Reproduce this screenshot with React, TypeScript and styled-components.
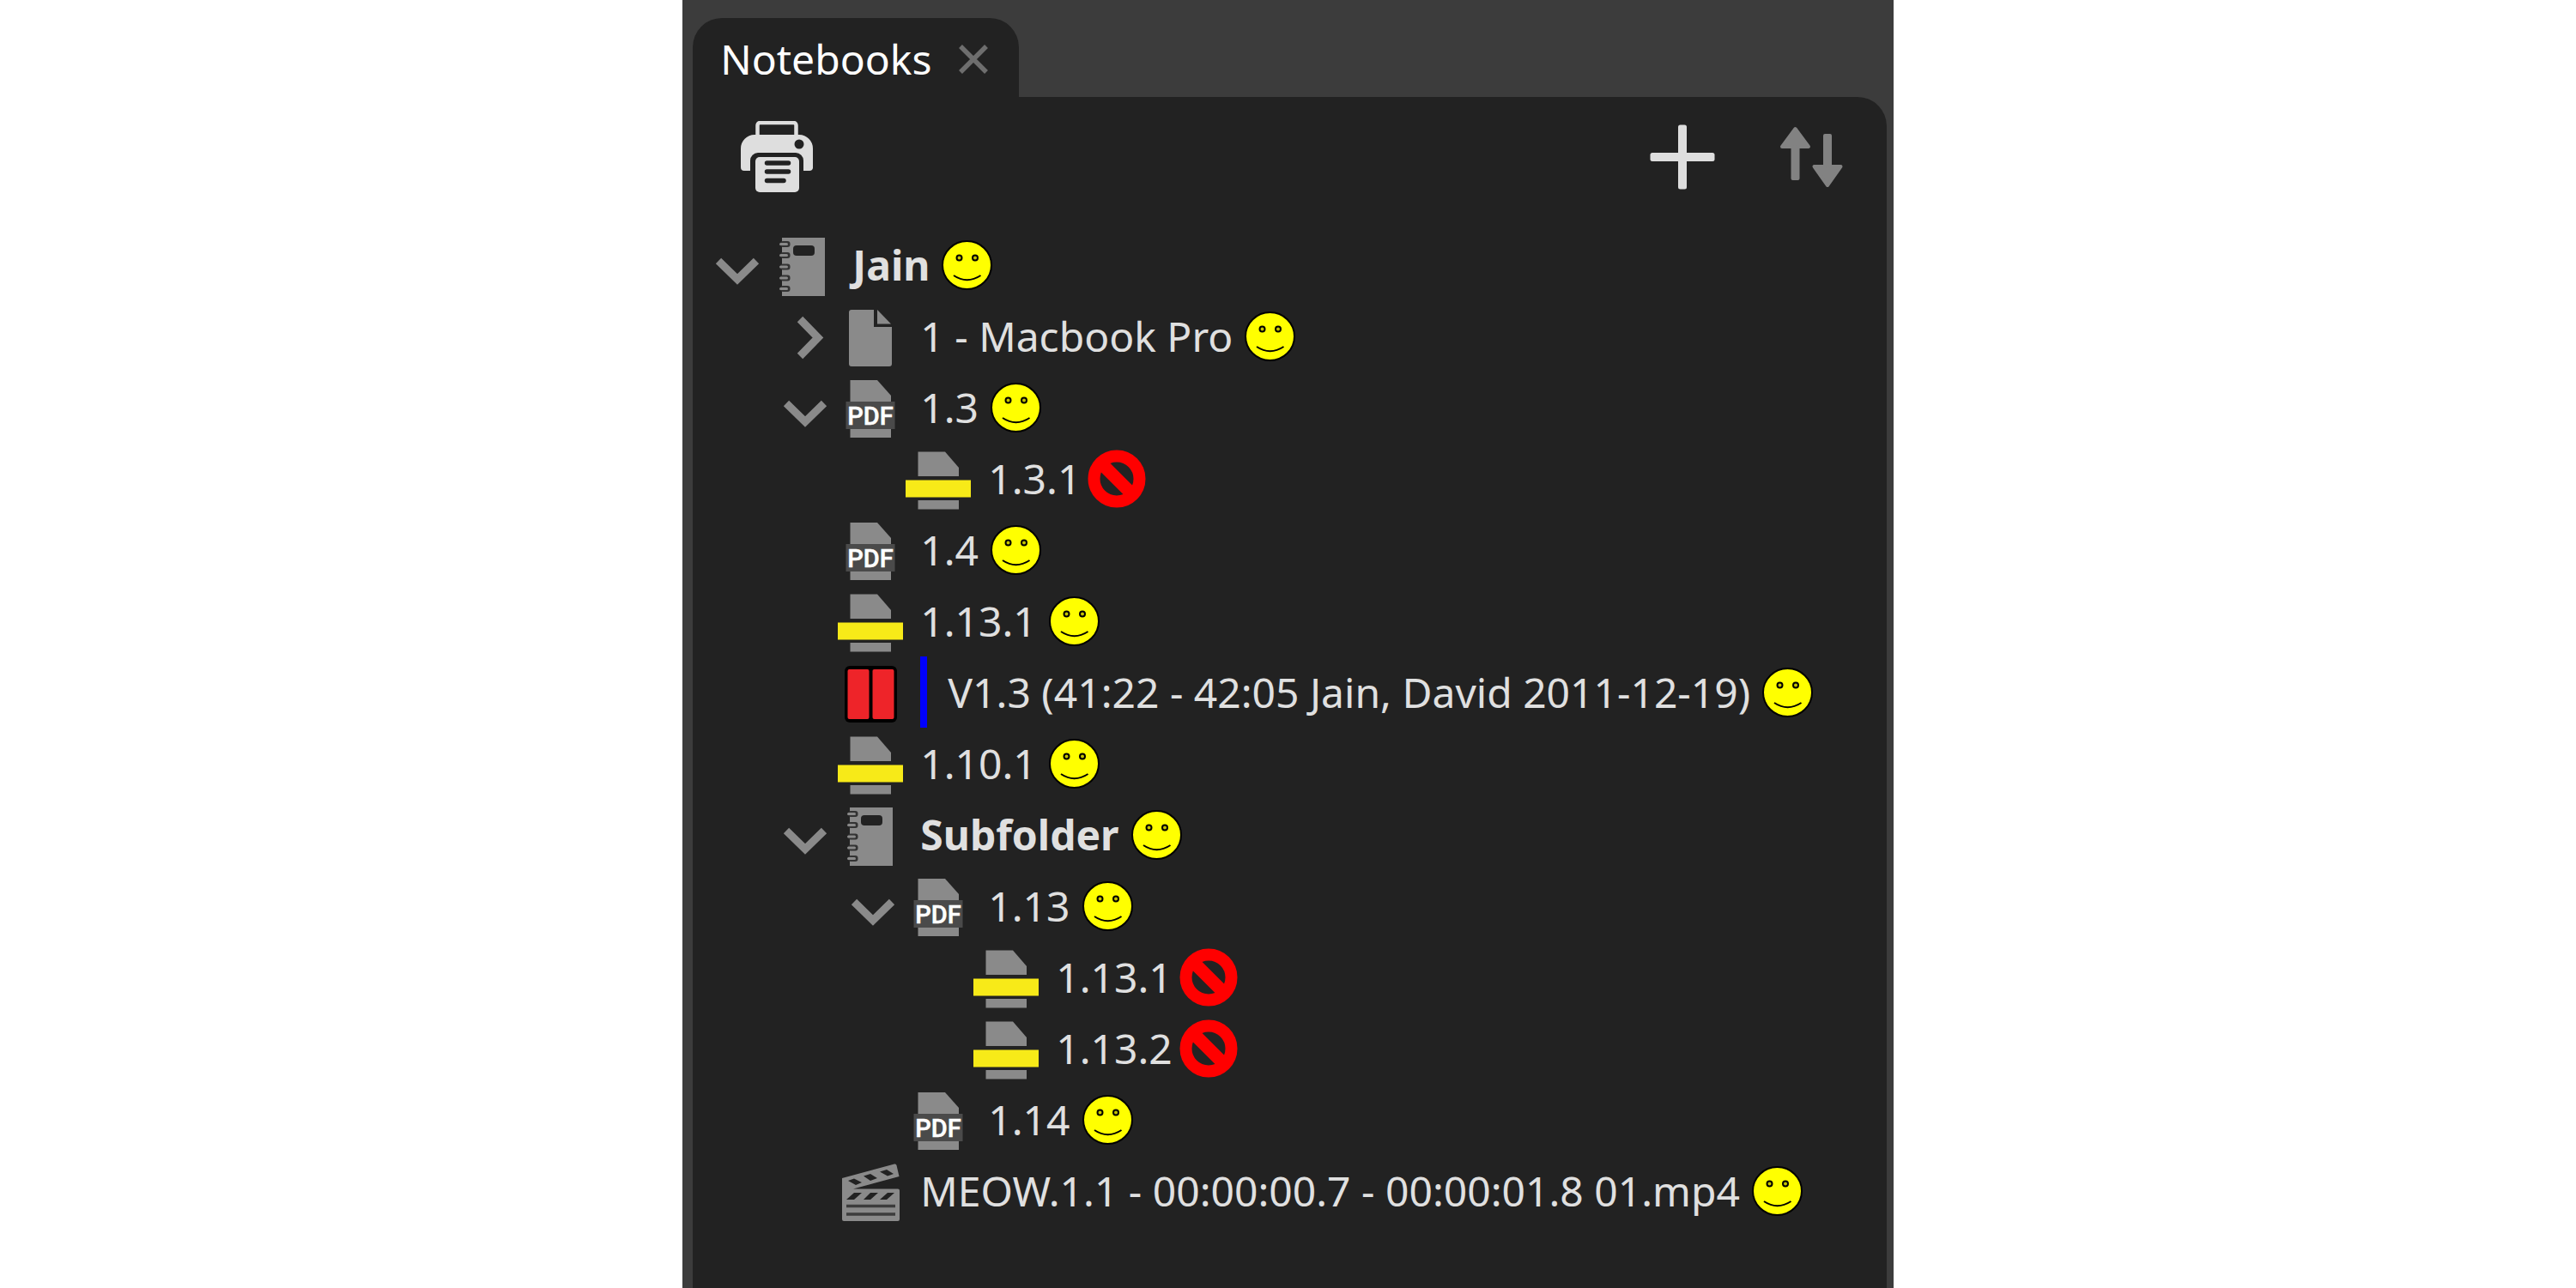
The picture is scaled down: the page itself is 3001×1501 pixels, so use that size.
import React from 'react';
import styled, { createGlobalStyle } from 'styled-components';

const GlobalStyle = createGlobalStyle`
  body { margin: 0; background: #ffffff; }
  * { box-sizing: border-box; }
`;

const Window = styled.main`
  width: 47%;
  min-width: 1410px;
  min-height: 100vh;
  margin: 0 auto;
  padding: 21px 8px 0 12px;
  display: flex;
  flex-direction: column;
  background: #3c3c3c;
  color: #e0e0e0;
  font-family: 'Noto Sans', 'Open Sans', sans-serif;
  font-size: 48px;
  line-height: 64px;
`;

const Tab = styled.div`
  align-self: flex-start;
  display: flex;
  align-items: center;
  gap: 32px;
  height: 92px;
  padding: 4px 36px 0 32px;
  border-radius: 34px 34px 0 0;
  background: #222222;
`;

const TabTitle = styled.h1`
  margin: 0;
  font-size: 48px;
  font-weight: 400;
  line-height: 64px;
  color: #ffffff;
`;

const IconButton = styled.button`
  display: flex;
  align-items: center;
  justify-content: center;
  padding: 0;
  border: 0;
  background: none;
  cursor: pointer;
`;

const Panel = styled.section`
  flex: 1;
  padding: 24px 16px;
  border-top-right-radius: 34px;
  background: #222222;
`;

const Toolbar = styled.div`
  display: flex;
  align-items: center;
  gap: 76px;
  height: 92px;
  padding: 0 32px 0 40px;
`;

const Spacer = styled.div`
  flex: 1;
`;

const Tree = styled.ul`
  margin: 40px 0 0;
  padding: 0;
  list-style: none;
`;

const Row = styled.li<{ $depth: number }>`
  display: flex;
  align-items: center;
  height: 83px;
  padding-left: ${(p) => p.$depth * 79}px;
`;

const Toggle = styled(IconButton)`
  width: 72px;
  height: 72px;
`;

const ToggleSpace = styled.span`
  width: 72px;
`;

const Glyph = styled.span`
  display: flex;
  justify-content: center;
  width: 80px;
  margin-right: 18px;
`;

const Label = styled.span<{ $bold?: boolean; $marked?: boolean }>`
  display: flex;
  align-items: center;
  height: 83px;
  margin-bottom: 4px;
  padding-left: ${(p) => (p.$marked ? 24 : 0)}px;
  border-left: ${(p) => (p.$marked ? '8px solid #0000ff' : '0')};
  font-weight: ${(p) => (p.$bold ? 700 : 400)};
  white-space: nowrap;
`;

const Status = styled.span<{ $kind: 'ok' | 'no' }>`
  display: flex;
  margin: 0 0 4px ${(p) => (p.$kind === 'ok' ? 14 : 8)}px;
`;

const GREY = '#8a8a8a';
const DARK = '#222222';

const CloseIcon = () => (
  <svg width="34" height="34" viewBox="0 0 34 34" aria-hidden="true">
    <path d="M2 2L32 32M32 2L2 32" stroke="#6e6e6e" strokeWidth="5.5" />
  </svg>
);

const PrinterIcon = () => (
  <svg width="84" height="84" viewBox="0 0 84 84" aria-hidden="true">
    <path d="M19.5 20V5a3 3 0 0 1 3-3h39a3 3 0 0 1 3 3v15" fill="none" stroke="#dedede" strokeWidth="4.5" />
    <path d="M16 16h52a16 16 0 0 1 16 16v23a4 4 0 0 1-4 3h-7V46a9 9 0 0 0-9-9H20a9 9 0 0 0-9 9v12H4a4 4 0 0 1-4-4V32a16 16 0 0 1 16-16z" fill="#dedede" />
    <rect x="17" y="42" width="51" height="41" rx="5" fill="#dedede" />
    <circle cx="68" cy="27" r="5.5" fill={DARK} />
    <path d="M30.5 49H55.5M30.5 59H55.5M30.5 69.5H50" stroke={DARK} strokeWidth="5.5" strokeLinecap="round" />
  </svg>
);

const PlusIcon = () => (
  <svg width="76" height="76" viewBox="0 0 76 76" aria-hidden="true">
    <rect x="0.5" y="33" width="75" height="10" rx="2.5" fill="#dedede" />
    <rect x="33" y="0.5" width="10" height="75" rx="2.5" fill="#dedede" />
  </svg>
);

const SortIcon = () => (
  <svg width="76" height="72" viewBox="0 0 76 72" aria-hidden="true">
    <g fill="#828282" stroke="#828282" strokeWidth="4" strokeLinejoin="round">
      <path d="M17.500 3L33 24H20.500V61H14.500V24H2Z" />
      <path d="M52 11H58V47H70.500L55 69L39.500 47H52Z" />
    </g>
  </svg>
);

const ChevronDown = () => (
  <svg width="52" height="52" viewBox="0 0 52 52" aria-hidden="true">
    <path d="M4 19L26 40.5L48 19" fill="none" stroke={GREY} strokeWidth="9" />
  </svg>
);

const ChevronRight = () => (
  <svg width="52" height="52" viewBox="0 0 52 52" aria-hidden="true">
    <path d="M20 4L41 25.5L20 47" fill="none" stroke={GREY} strokeWidth="9" />
  </svg>
);

const NotebookIcon = () => (
  <svg width="54" height="68" viewBox="0 0 54 68" aria-hidden="true">
    <rect x="3" y="0" width="50" height="68" fill={GREY} />
    <rect x="16" y="9" width="25" height="12" rx="4" fill={DARK} />
    {[7.5, 20.5, 34, 47, 59.5].map((y) => (
      <g key={y}>
        <rect x="1" y={y - 3.5} width="11.5" height="7" rx="3" fill="#333333" />
        <rect x="0" y={y - 1.5} width="10" height="3" rx="1.5" fill={GREY} />
      </g>
    ))}
  </svg>
);

const PageIcon = () => (
  <svg width="50" height="68" viewBox="0 0 50 68" aria-hidden="true">
    <path d="M3 1H29V21H50V64a3 3 0 0 1-3 3H3a3 3 0 0 1-3-3V4a3 3 0 0 1 3-3Z" fill={GREY} />
    <path d="M33 1L49 17.5H33Z" fill={GREY} />
  </svg>
);

const PdfIcon = () => (
  <svg width="58" height="68" viewBox="0 0 58 68" aria-hidden="true">
    <path d="M5.5 0H37L53 18V67H5.5Z" fill={GREY} />
    <rect x="0.5" y="25" width="57" height="32" fill="#4a4a4a" />
    <text x="29" y="52" textAnchor="middle" fontFamily="Roboto, sans-serif" fontSize="29" fontWeight="500" fill="#ffffff" stroke="#ffffff" strokeWidth="0.5">PDF</text>
  </svg>
);

const ExcerptIcon = () => (
  <svg width="76" height="68" viewBox="0 0 76 68" aria-hidden="true">
    <path d="M14.5 0.5H46L62 19V29H14.5Z" fill={GREY} />
    <rect x="0" y="33.5" width="76" height="20" fill="#f7ea18" />
    <rect x="14.5" y="57" width="47.5" height="10.5" fill={GREY} />
  </svg>
);

const ClipIcon = () => (
  <svg width="62" height="66" viewBox="0 0 62 66" aria-hidden="true">
    <rect x="1" width="61" height="66" rx="6" fill="#000000" />
    <rect x="4.5" y="4" width="25" height="58" rx="2" fill="#ee2429" />
    <rect x="33.5" y="4" width="25" height="58" rx="2" fill="#ee2429" />
  </svg>
);

const FilmIcon = () => (
  <svg width="68" height="68" viewBox="0 0 68 68" aria-hidden="true">
    <path d="M1 17L62 0.5Q64 0 64.5 2L67.5 15L14 29.5H66a2 2 0 0 1 2 2V65a2 2 0 0 1-2 2H3a2 2 0 0 1-2-2Z" fill={GREY} />
    <path d="M8 20L15 17.5L24 22L17 25ZM26 14.5L34 12L42 17L34 20ZM45 9.5L53 7L61 12L54 14.5Z" fill={DARK} />
    <path d="M6 42L15 34H24L15 42ZM26 42L34 34H43L34 42ZM45 42L54 34H62L53 42Z" fill={DARK} />
    <path d="M6 49.5H63M6 59H63" stroke="#3c3c3c" strokeWidth="3.5" />
  </svg>
);

const Smiley = () => (
  <svg width="59" height="58" viewBox="0 0 59 58" role="img" aria-label="Allowed">
    <ellipse cx="29.5" cy="29" rx="28.5" ry="28" fill="#ffff00" stroke="#000000" strokeWidth="2" />
    <g fill="#c4c400" stroke="#000000" strokeWidth="2">
      <circle cx="20.5" cy="20.5" r="3" />
      <circle cx="39" cy="20.5" r="3" />
    </g>
    <path d="M14 41Q29.5 51.5 45.5 41" fill="none" stroke="#000000" strokeWidth="2" />
  </svg>
);

const Prohibited = () => (
  <svg width="68" height="68" viewBox="0 0 68 68" role="img" aria-label="Not allowed">
    <circle cx="34" cy="34" r="26.5" fill="none" stroke="#ff0000" strokeWidth="14" />
    <path d="M15 15L53 53" stroke="#ff0000" strokeWidth="15" />
  </svg>
);

const icons = {
  notebook: NotebookIcon,
  page: PageIcon,
  pdf: PdfIcon,
  excerpt: ExcerptIcon,
  clip: ClipIcon,
  film: FilmIcon,
};

type Item = {
  label: string;
  icon: keyof typeof icons;
  depth: number;
  open?: boolean;
  status: 'ok' | 'no';
  bold?: boolean;
  marked?: boolean;
};

const items: Item[] = [
  { label: 'Jain', icon: 'notebook', depth: 0, open: true, status: 'ok', bold: true },
  { label: '1 - Macbook Pro', icon: 'page', depth: 1, open: false, status: 'ok' },
  { label: '1.3', icon: 'pdf', depth: 1, open: true, status: 'ok' },
  { label: '1.3.1', icon: 'excerpt', depth: 2, status: 'no' },
  { label: '1.4', icon: 'pdf', depth: 1, status: 'ok' },
  { label: '1.13.1', icon: 'excerpt', depth: 1, status: 'ok' },
  { label: 'V1.3 (41:22 - 42:05 Jain, David 2011-12-19)', icon: 'clip', depth: 1, status: 'ok', marked: true },
  { label: '1.10.1', icon: 'excerpt', depth: 1, status: 'ok' },
  { label: 'Subfolder', icon: 'notebook', depth: 1, open: true, status: 'ok', bold: true },
  { label: '1.13', icon: 'pdf', depth: 2, open: true, status: 'ok' },
  { label: '1.13.1', icon: 'excerpt', depth: 3, status: 'no' },
  { label: '1.13.2', icon: 'excerpt', depth: 3, status: 'no' },
  { label: '1.14', icon: 'pdf', depth: 2, status: 'ok' },
  { label: 'MEOW.1.1 - 00:00:00.7 - 00:00:01.8 01.mp4', icon: 'film', depth: 1, status: 'ok' },
];

function TreeRow({ item }: { item: Item }) {
  const Icon = icons[item.icon];
  return (
    <Row $depth={item.depth}>
      {item.open === undefined ? (
        <ToggleSpace />
      ) : (
        <Toggle type="button" aria-expanded={item.open} aria-label={`Toggle ${item.label}`}>
          {item.open ? <ChevronDown /> : <ChevronRight />}
        </Toggle>
      )}
      <Glyph>
        <Icon />
      </Glyph>
      <Label $bold={item.bold} $marked={item.marked}>
        {item.label}
      </Label>
      <Status $kind={item.status}>{item.status === 'ok' ? <Smiley /> : <Prohibited />}</Status>
    </Row>
  );
}

export default function App() {
  return (
    <>
      <GlobalStyle />
      <Window>
        <Tab>
          <TabTitle>Notebooks</TabTitle>
          <IconButton type="button" aria-label="Close tab">
            <CloseIcon />
          </IconButton>
        </Tab>
        <Panel>
          <Toolbar>
            <IconButton type="button" aria-label="Print">
              <PrinterIcon />
            </IconButton>
            <Spacer />
            <IconButton type="button" aria-label="Add">
              <PlusIcon />
            </IconButton>
            <IconButton type="button" aria-label="Sort">
              <SortIcon />
            </IconButton>
          </Toolbar>
          <Tree>
            {items.map((item, i) => (
              <TreeRow key={i} item={item} />
            ))}
          </Tree>
        </Panel>
      </Window>
    </>
  );
}
